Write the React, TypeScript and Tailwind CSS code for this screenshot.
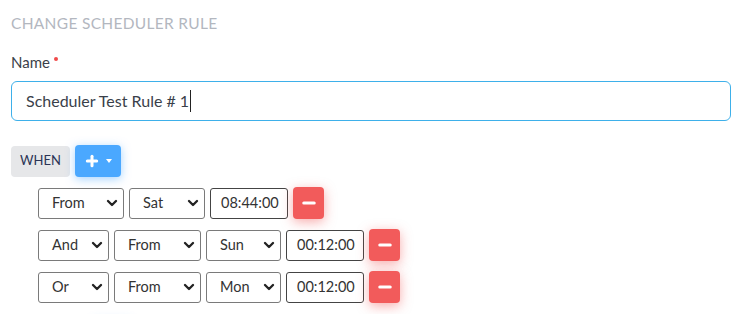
import { Plus, Minus, ChevronDown } from 'lucide-react'

const font = { fontFamily: 'Lato, "Open Sans", sans-serif' }

function FakeSelect({ value, width }: { value: string; width: string }) {
  return (
    <div className={`${width} h-[31px] flex items-center justify-between pl-[13px] pr-[3px] border border-[#7a7a7a] rounded-[3px] bg-white text-[14.5px] text-[#333]`}>
      <span>{value}</span>
      <ChevronDown size={16} strokeWidth={3.5} className="text-[#222]" />
    </div>
  )
}

function TimeBox({ value }: { value: string }) {
  return (
    <div className="w-[78px] h-[31px] flex items-center pl-[10px] border border-[#444] rounded-[3px] bg-white text-[14.5px] text-[#333]">
      {value}
    </div>
  )
}

function RemoveBtn() {
  return (
    <button className="w-[31px] h-[32px] flex items-center justify-center rounded-[4px] bg-[#f25b5b] text-white shadow-[0_3px_12px_rgba(242,91,91,0.5)]">
      <Minus size={18} strokeWidth={4} />
    </button>
  )
}

type Row = { op?: string; opW?: string; kind: string; kindW: string; day: string; dayW: string; time: string }

const rows: Row[] = [
  { kind: 'From', kindW: 'w-[86px]', day: 'Sat', dayW: 'w-[76px]', time: '08:44:00' },
  { op: 'And', opW: 'w-[71px]', kind: 'From', kindW: 'w-[87px]', day: 'Sun', dayW: 'w-[75px]', time: '00:12:00' },
  { op: 'Or', opW: 'w-[71px]', kind: 'From', kindW: 'w-[87px]', day: 'Mon', dayW: 'w-[75px]', time: '00:12:00' },
]

export default function App() {
  return (
    <div className="w-[750px] h-[314px] overflow-hidden bg-white px-[11px] pt-[13px]" style={font}>
      <h2 className="text-[15.5px] leading-[20px] text-[#b3b7bf] tracking-[0.02em]">CHANGE SCHEDULER RULE</h2>

      <div className="mt-[19px] flex items-start text-[15px] leading-[20px] text-[#3b3f4a]">
        Name<span className="ml-[4px] mt-[5px] w-[4px] h-[4px] rounded-full bg-[#f04a4a]" />
      </div>

      <div className="mt-[9px] w-[720px] h-[40px] flex items-center px-[14px] border border-[#3eb0ea] rounded-[6px] text-[16px] text-[#3a3f4a]">
        Scheduler Test Rule # 1<span className="w-px h-[22px] bg-[#222] ml-[1px]" />
      </div>

      <div className="mt-[24px] flex items-center gap-[5px]">
        <div className="h-[31px] w-[59px] flex items-center justify-center rounded-[4px] bg-[#e6e7e9] text-[13px] text-[#2b3456]">
          WHEN
        </div>
        <button className="h-[32px] w-[46px] flex items-center justify-center gap-[6px] rounded-[4px] bg-[#4aa8ff] text-white shadow-[0_2px_10px_rgba(74,168,255,0.5)]">
          <Plus size={16} strokeWidth={4.5} />
          <span className="w-0 h-0 border-l-[3px] border-r-[3px] border-t-[4px] border-l-transparent border-r-transparent border-t-white" />
        </button>
      </div>

      <div className="mt-[10px] ml-[27px] flex flex-col gap-[10px]">
        {rows.map((r, i) => (
          <div key={i} className="flex items-center gap-[5px]">
            {r.op && <FakeSelect value={r.op} width={r.opW!} />}
            <FakeSelect value={r.kind} width={r.kindW} />
            <FakeSelect value={r.day} width={r.dayW} />
            <TimeBox value={r.time} />
            <RemoveBtn />
          </div>
        ))}
      </div>

      <div className="mt-[17px] ml-[82px] flex gap-[5px]">
        <button className="h-[32px] w-[38px] rounded-[4px] bg-[#4aa8ff] shadow-[0_0_10px_rgba(74,168,255,0.35)]" />
      </div>
    </div>
  )
}
